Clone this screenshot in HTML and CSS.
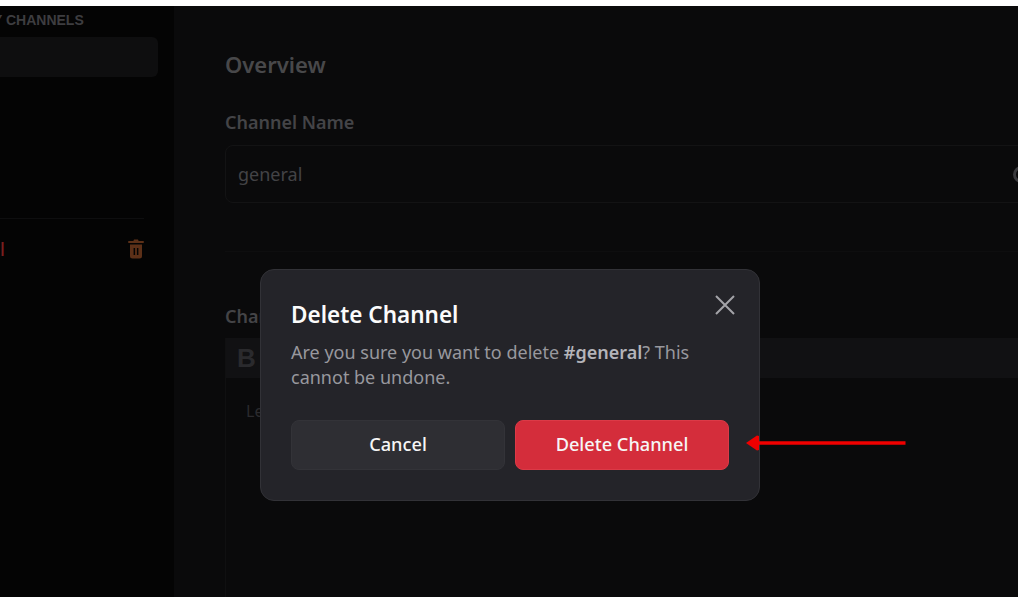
FILE: index.html
```html
<!DOCTYPE html>
<html lang="en">
<head>
  <meta charset="UTF-8">
  <title>Delete Channel</title>
  <link rel="stylesheet" href="styles.css">
</head>
<body>

  <div class="app">
    <div class="sidebar">
      <div class="side-title">Y CHANNELS</div>
      <div class="side-active"></div>
      <div class="side-line"></div>
      <div class="side-row">
        <span class="side-delete">l</span>
        <svg class="trash" viewBox="0 0 16 20" width="16" height="20">
          <path d="M6 0.5h4l0.6 1.5H15a1 1 0 0 1 0 2H1a1 1 0 0 1 0-2h4.4z" fill="#5c3018"/>
          <path fill-rule="evenodd" d="M2 5.5h12v11.5a2.5 2.5 0 0 1-2.5 2.5h-7A2.5 2.5 0 0 1 2 17zM5.6 9v7h1.5V9zM8.9 9v7h1.5V9z" fill="#5c3018"/>
        </svg>
      </div>
    </div>

    <div class="main">
      <h2 class="title">Overview</h2>
      <div class="label">Channel Name</div>
      <div class="name-input">
        <span>general</span>
        <span class="emoji"></span>
      </div>
      <div class="main-line"></div>
      <div class="label topic-label">Channel Topic</div>
      <div class="editor">
        <div class="toolbar"><b>B</b></div>
        <div class="placeholder">Let everyone know how to use this channel</div>
      </div>
    </div>
  </div>

  <div class="modal">
    <svg class="close" viewBox="0 0 20 20" width="20" height="20">
      <path d="M1 1L19 19M19 1L1 19" stroke="#a3a3a8" stroke-width="2" fill="none"/>
    </svg>
    <h3>Delete Channel</h3>
    <p>Are you sure you want to delete <strong>#general</strong>? This cannot be undone.</p>
    <div class="buttons">
      <button class="btn btn-cancel">Cancel</button>
      <button class="btn btn-delete">Delete Channel</button>
    </div>
  </div>

  <svg class="arrow" viewBox="0 0 160 16" width="160" height="16">
    <path d="M10 8H159.500" stroke="#f00000" stroke-width="3.500" fill="none"/>
    <path d="M0 8L11 0.500L13 1V15L11 15.500z" fill="#f00000"/>
  </svg>

</body>
</html>
```

FILE: styles.css
```css
html, body {
  height: 100%;
}

body {
  margin: 0;
  padding-top: 6px;
  box-sizing: border-box;
  background: #fff;
  font-family: "Noto Sans", Arial, sans-serif;
  overflow: hidden;
}

.app {
  display: flex;
  height: 100%;
  background: #0a0a0b;
}

.sidebar {
  width: 174px;
  flex-shrink: 0;
  background: #040404;
  overflow: hidden;
}

.side-title {
  margin: 7px 0 0 -7px;
  font-family: "Liberation Sans", Arial, sans-serif;
  font-size: 14px;
  line-height: 15px;
  font-weight: bold;
  color: #3d3d40;
  white-space: nowrap;
}

.side-active {
  width: 158px;
  height: 40px;
  margin-top: 9px;
  background: #0e0e0f;
  border-radius: 0 6px 6px 0;
}

.side-line {
  width: 144px;
  height: 1px;
  margin-top: 141px;
  background: #0e0e0f;
}

.side-row {
  display: flex;
  justify-content: space-between;
  width: 144px;
  margin-top: 20px;
}

.side-delete {
  font-size: 18px;
  line-height: 20px;
  font-weight: 500;
  color: #7a1f1f;
}

.main {
  flex: 1;
  padding: 0 0 0 51px;
  min-width: 0;
  overflow: hidden;
}

.title {
  margin: 43px 0 0;
  font-size: 22px;
  line-height: 30px;
  font-weight: 600;
  color: #48484a;
}

.label {
  margin-top: 31px;
  font-size: 18px;
  line-height: 24px;
  font-weight: 600;
  color: #444447;
}

.name-input {
  display: flex;
  justify-content: space-between;
  align-items: center;
  height: 56px;
  margin-top: 11px;
  margin-right: -20px;
  padding-left: 12px;
  border: 1px solid #131314;
  border-radius: 8px;
  font-size: 18px;
  color: #434346;
}

.emoji {
  width: 17px;
  height: 17px;
  margin-right: 7px;
  border: 3px solid #3a3a3d;
  border-radius: 50%;
  box-sizing: border-box;
}

.main-line {
  height: 1px;
  margin-top: 48px;
  background: #0e0e0f;
}

.topic-label {
  margin-top: 52px;
}

.editor {
  margin-top: 10px;
  height: 259px;
  border-left: 1px solid #101011;
}

.toolbar {
  height: 40px;
  padding-left: 11px;
  background: #111113;
  font-family: "Liberation Sans", Arial, sans-serif;
  font-size: 26px;
  line-height: 40px;
  color: #2a2a2d;
}

.placeholder {
  margin: 23px 0 0 20px;
  font-size: 16px;
  line-height: 20px;
  color: #2b2b2e;
}

.modal {
  position: absolute;
  left: 260px;
  top: 269px;
  width: 500px;
  height: 232px;
  box-sizing: border-box;
  padding: 30px;
  background: #242429;
  border: 1px solid #323237;
  border-radius: 14px;
}

.close {
  position: absolute;
  right: 24px;
  top: 25px;
}

.modal h3 {
  margin: 0;
  font-size: 22.5px;
  line-height: 30px;
  font-weight: 600;
  color: #fbfbfb;
}

.modal p {
  margin: 10px 0 0;
  font-size: 18px;
  line-height: 25px;
  color: #98989e;
}

.modal strong {
  font-weight: 600;
  color: #b4b4b9;
}

.buttons {
  display: flex;
  gap: 10px;
  margin-top: 30px;
}

.btn {
  width: 214px;
  height: 50px;
  padding: 0 0 2px;
  border-radius: 8px;
  font-family: inherit;
  font-size: 18.200px;
  font-weight: 500;
  color: #f6f6f6;
  cursor: pointer;
}

.btn-cancel {
  background: #2e2e33;
  border: 1px solid #333338;
}

.btn-delete {
  background: #d42d3b;
  border: 1px solid #dc3a47;
}

.arrow {
  position: absolute;
  left: 746px;
  top: 435px;
}
```
